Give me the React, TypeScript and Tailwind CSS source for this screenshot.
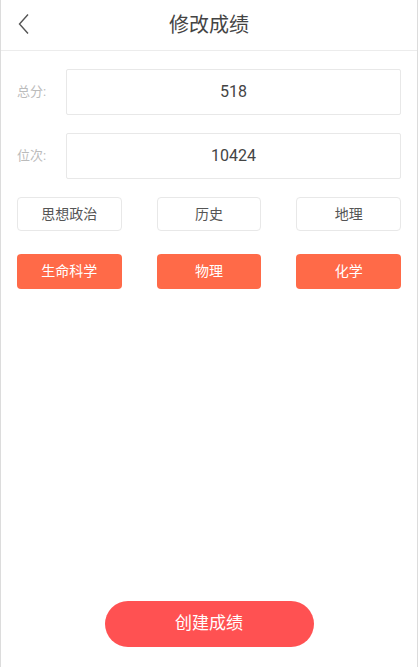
const font = { fontFamily: 'Roboto, "Noto Sans CJK SC", sans-serif' };

export default function App() {
  const plain = ['思想政治', '历史', '地理'];
  const picked = ['生命科学', '物理', '化学'];

  return (
    <div className="w-[418px] h-[667px] bg-white border-x border-[#dcdcdc] flex flex-col" style={font}>
      {/* Header */}
      <div className="h-[51px] shrink-0 border-b border-[#ececec] flex items-center relative">
        <svg width="12" height="22" viewBox="0 0 12 22" className="absolute left-[17px] top-[13px]">
          <path d="M10 1.5 1.5 11 10 20.5" fill="none" stroke="#555" strokeWidth="1.4" />
        </svg>
        <p className="flex-1 text-center text-[20px] text-[#444]">修改成绩</p>
      </div>

      <div className="flex-1 flex flex-col px-[16px] pt-[18px]">
        {[['总分:', '518'], ['位次:', '10424']].map(([label, value]) => (
          <div key={label} className="flex items-center mb-[18px]">
            <span className="w-[49px] text-[13px] text-[#bbb]">{label}</span>
            <div className="flex-1 h-[46px] border border-[#e8e8e8] rounded-[2px] flex items-center justify-center text-[16px] text-[#444]">
              {value}
            </div>
          </div>
        ))}

        <div className="grid grid-cols-3 gap-x-[35px]">
          {plain.map((s) => (
            <div
              key={s}
              className="h-[34px] border border-[#e8e8e8] rounded-[4px] flex items-center justify-center text-[14px] text-[#555]"
            >
              {s}
            </div>
          ))}
        </div>
        <div className="grid grid-cols-3 gap-x-[35px] mt-[23px]">
          {picked.map((s) => (
            <div
              key={s}
              className="h-[35px] bg-[#ff6a48] rounded-[4px] flex items-center justify-center text-[14px] text-white"
            >
              {s}
            </div>
          ))}
        </div>

        <div className="flex-1" />
        <div className="flex justify-center mb-[20px]">
          <button className="w-[209px] h-[46px] rounded-full bg-[#ff5152] text-white text-[17px]">创建成绩</button>
        </div>
      </div>
    </div>
  );
}
